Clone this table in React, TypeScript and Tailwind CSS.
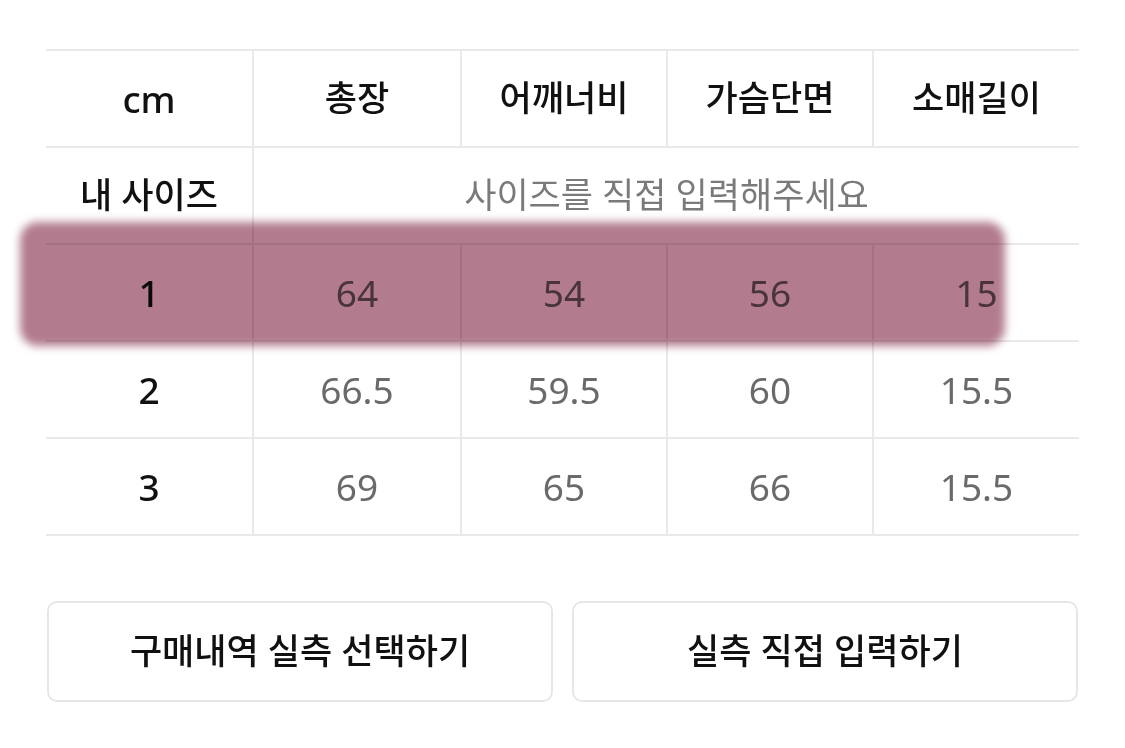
import React from "react";

const FONT = { fontFamily: '"Noto Sans", "Noto Sans CJK KR", sans-serif' };

const headers = ["총장", "어깨너비", "가슴단면", "소매길이"];
const rows = [
  ["1", "64", "54", "56", "15"],
  ["2", "66.5", "59.5", "60", "15.5"],
  ["3", "69", "65", "66", "15.5"],
];

const cols = "grid grid-cols-[206px_208px_206px_206px_207px]";

export default function App() {
  return (
    <div className="relative w-[1125px] h-[748px] bg-white overflow-hidden" style={FONT}>
      <div className="flex flex-col pt-[49px] pl-[46px]">
        <div className="w-[1033px] border-t-2 border-[#e9e9e9]">
          <div className={`${cols} h-[97px] border-b-2 border-[#e9e9e9]`}>
            <div className="flex items-center justify-center text-[37px] font-medium text-[#111]">cm</div>
            {headers.map((h) => (
              <div
                key={h}
                className="flex items-center justify-center border-l-2 border-[#e9e9e9] text-[35px] font-medium text-[#111]"
              >
                {h}
              </div>
            ))}
          </div>
          <div className="grid grid-cols-[206px_827px] h-[97px] border-b-2 border-[#e9e9e9]">
            <div className="flex items-center justify-center text-[35px] font-medium text-[#111]">내 사이즈</div>
            <div className="flex items-center justify-center border-l-2 border-[#e9e9e9] text-[35px] text-[#7a7a7a]">
              사이즈를 직접 입력해주세요
            </div>
          </div>
          {rows.map((r) => (
            <div key={r[0]} className={`${cols} h-[97px] border-b-2 border-[#e9e9e9]`}>
              <div className="flex items-center justify-center text-[37px] font-medium text-[#111]">{r[0]}</div>
              {r.slice(1).map((v, i) => (
                <div
                  key={i}
                  className="flex items-center justify-center border-l-2 border-[#e9e9e9] text-[37px] text-[#6a6a6a]"
                >
                  {v}
                </div>
              ))}
            </div>
          ))}
        </div>
        <div className="flex gap-[19px] mt-[65px] pl-[1px]">
          <button className="w-[506px] h-[101px] rounded-[10px] border-2 border-[#e6e6e6] bg-white text-[35px] font-medium text-[#111]">
            구매내역 실측 선택하기
          </button>
          <button className="w-[506px] h-[101px] rounded-[10px] border-2 border-[#e6e6e6] bg-white text-[35px] font-medium text-[#111]">
            실측 직접 입력하기
          </button>
        </div>
      </div>
      <div className="absolute left-[20px] top-[222px] w-[985px] h-[124px] rounded-[18px] bg-[#b27c8e] mix-blend-multiply blur-[4px]" />
    </div>
  );
}
